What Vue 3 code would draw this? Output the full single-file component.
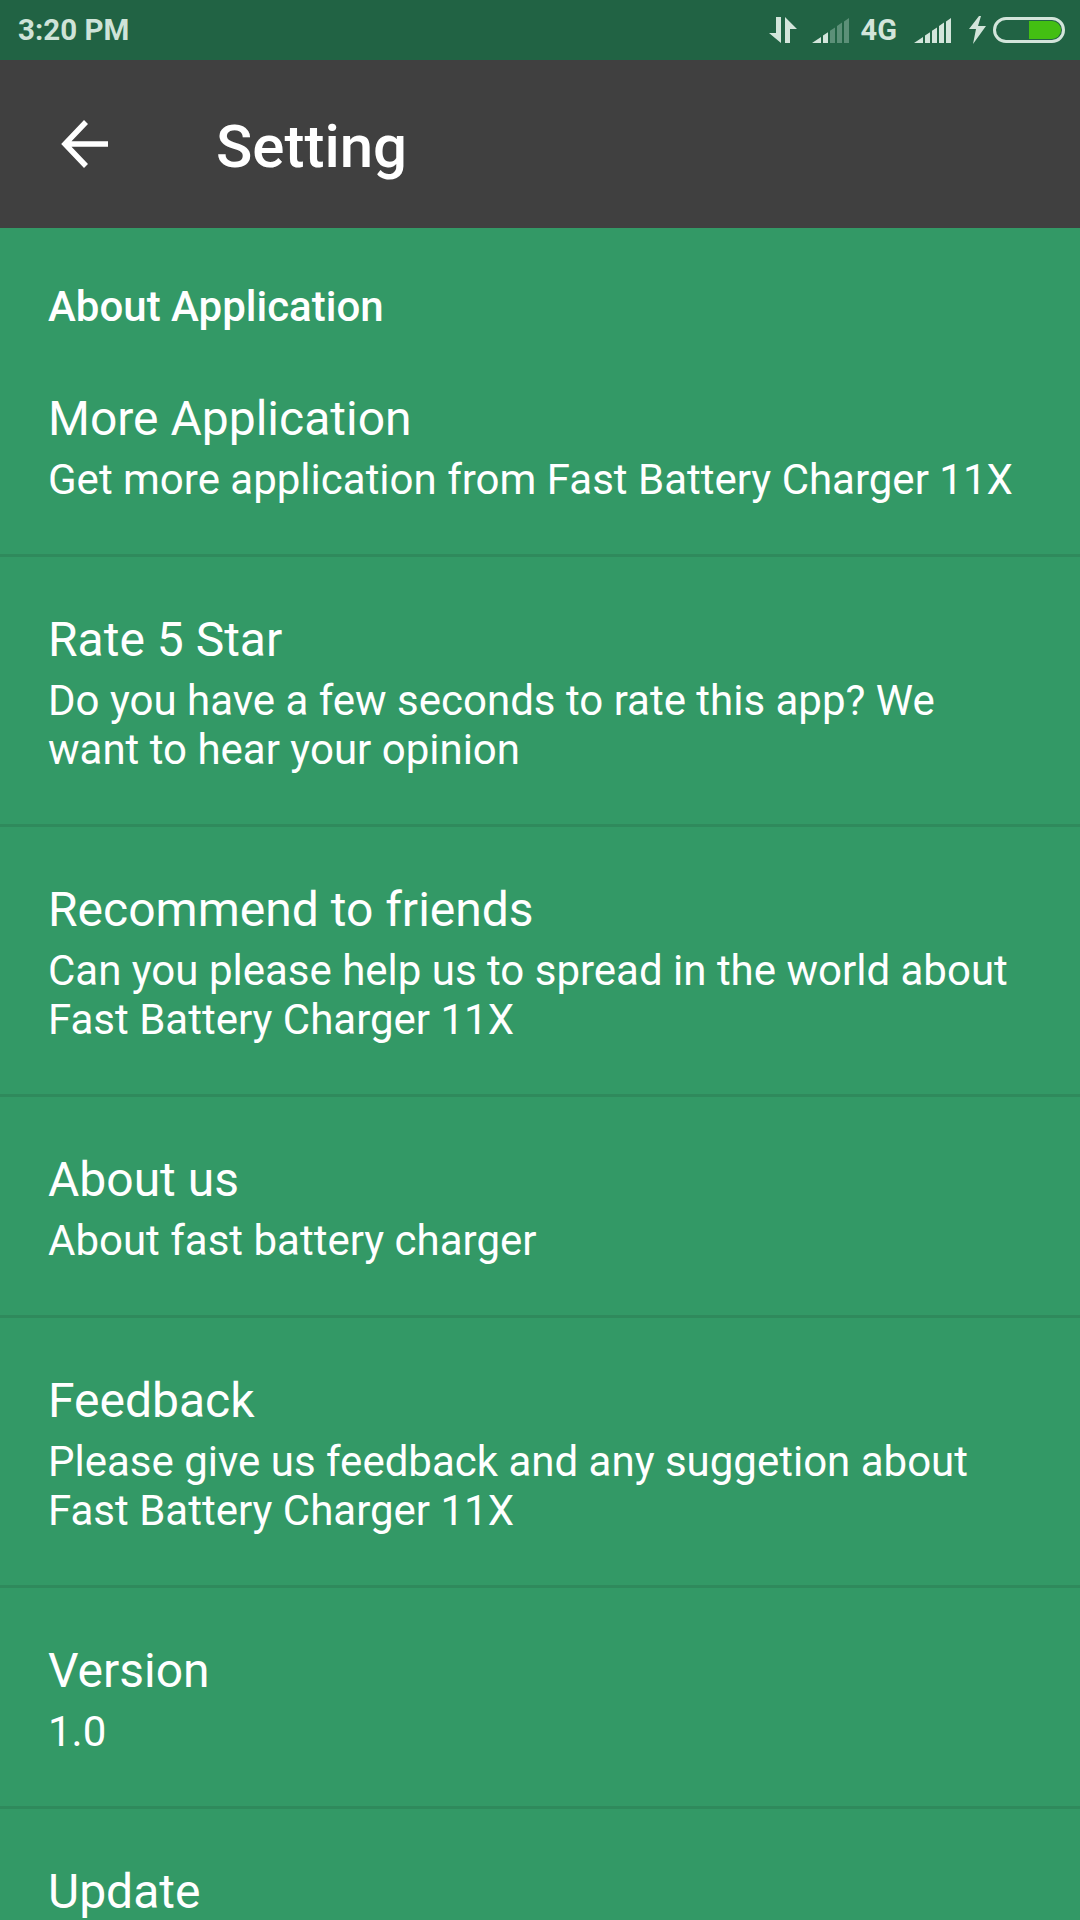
<script setup>
const rows = [
  { title: 'More Application', sub: 'Get more application from Fast Battery Charger 11X' },
  { title: 'Rate 5 Star', sub: 'Do you have a few seconds to rate this app? We want to hear your opinion' },
  { title: 'Recommend to friends', sub: 'Can you please help us to spread in the world about Fast Battery Charger 11X' },
  { title: 'About us', sub: 'About fast battery charger' },
  { title: 'Feedback', sub: 'Please give us feedback and any suggetion about Fast Battery Charger 11X' },
  { title: 'Version', sub: '1.0' },
  { title: 'Update', sub: 'Check for updates' }
]
</script>

<template>
  <div class="screen">
    <div class="status">
      <span class="time">3:20 PM</span>
      <div class="status-icons">
        <svg class="data" width="28" height="26" viewBox="0 0 28 26">
          <path d="M7 0h5v26L0 16h7z" fill="#d3e5db" />
          <path d="M16 0l12 12h-7v14h-5z" fill="#d3e5db" />
        </svg>
        <svg class="sig1" width="37" height="26" viewBox="0 0 37 26">
          <path d="M0 26l9-6v6zM11 18.6l5-3.4V26h-5z" fill="#d3e5db" />
          <path d="M18 13.8l5-3.4V26h-5zM25 9l5-3.4V26h-5zM32 4.4L37 1v25h-5z" fill="#5c9078" />
        </svg>
        <span class="net">4G</span>
        <svg class="sig2" width="37" height="26" viewBox="0 0 37 26">
          <path d="M0 26l9-6v6zM11 18.6l5-3.4V26h-5zM18 13.8l5-3.4V26h-5zM25 9l5-3.4V26h-5zM32 4.4L37 1v25h-5z" fill="#d3e5db" />
        </svg>
        <svg class="bolt" width="17" height="28" viewBox="0 0 17 28">
          <path d="M10 0L0 13h7L4 28l13-18H9l3-10z" fill="#d3e5db" />
        </svg>
        <div class="battery"><div class="level"></div></div>
      </div>
    </div>

    <header class="toolbar">
      <svg class="back" width="48" height="48" viewBox="0 0 48 48">
        <path d="M48 24H5M26 2L5 24l21 22" fill="none" stroke="#fff" stroke-width="5.5" />
      </svg>
      <h1>Setting</h1>
    </header>

    <main class="list">
      <h2>About Application</h2>
      <div v-for="row in rows" :key="row.title" class="row">
        <div class="title">{{ row.title }}</div>
        <div class="sub">{{ row.sub }}</div>
      </div>
    </main>
  </div>
</template>

<style>
html, body { margin: 0; background: #339966; }
</style>

<style scoped>
* { box-sizing: border-box; }

.screen {
  width: 1080px;
  height: 1920px;
  overflow: hidden;
  background: #339966;
  font-family: Roboto, sans-serif;
  color: #fff;
}

.status {
  height: 60px;
  background: #216344;
  display: flex;
  align-items: center;
  justify-content: space-between;
  padding: 0 15px 0 18px;
}

.time {
  font-size: 29.5px;
  font-weight: 700;
  color: #cfe3d8;
}

.status-icons {
  display: flex;
  align-items: center;
}

.data { margin-right: 15px; }
.net {
  font-size: 29px;
  font-weight: 700;
  color: #d3e5db;
  margin: 0 17px 0 12px;
}
.bolt { margin: 0 7px 0 18px; }

.battery {
  width: 72px;
  height: 26px;
  border: 3px solid #d3e5db;
  border-radius: 13px;
  padding: 1px;
  display: flex;
  justify-content: flex-end;
}

.level {
  width: 32px;
  background: #43bf12;
  border-radius: 0 9px 9px 0;
}

.toolbar {
  height: 168px;
  background: #404040;
  display: flex;
  align-items: center;
  padding-left: 60px;
}

.back { margin-right: 108px; }

h1 {
  margin: 4px 0 0;
  font-size: 60px;
  font-weight: 500;
}

.list { padding-top: 55px; }

h2 {
  margin: 0 0 6px;
  padding: 0 48px;
  font-size: 42px;
  font-weight: 500;
  line-height: 47px;
}

.row {
  padding: 47px 60px 50px 48px;
  border-bottom: 3px solid #2f8a5c;
}

.title {
  font-size: 48px;
  line-height: 72px;
}

.sub {
  font-size: 42px;
  line-height: 49px;
}
</style>
